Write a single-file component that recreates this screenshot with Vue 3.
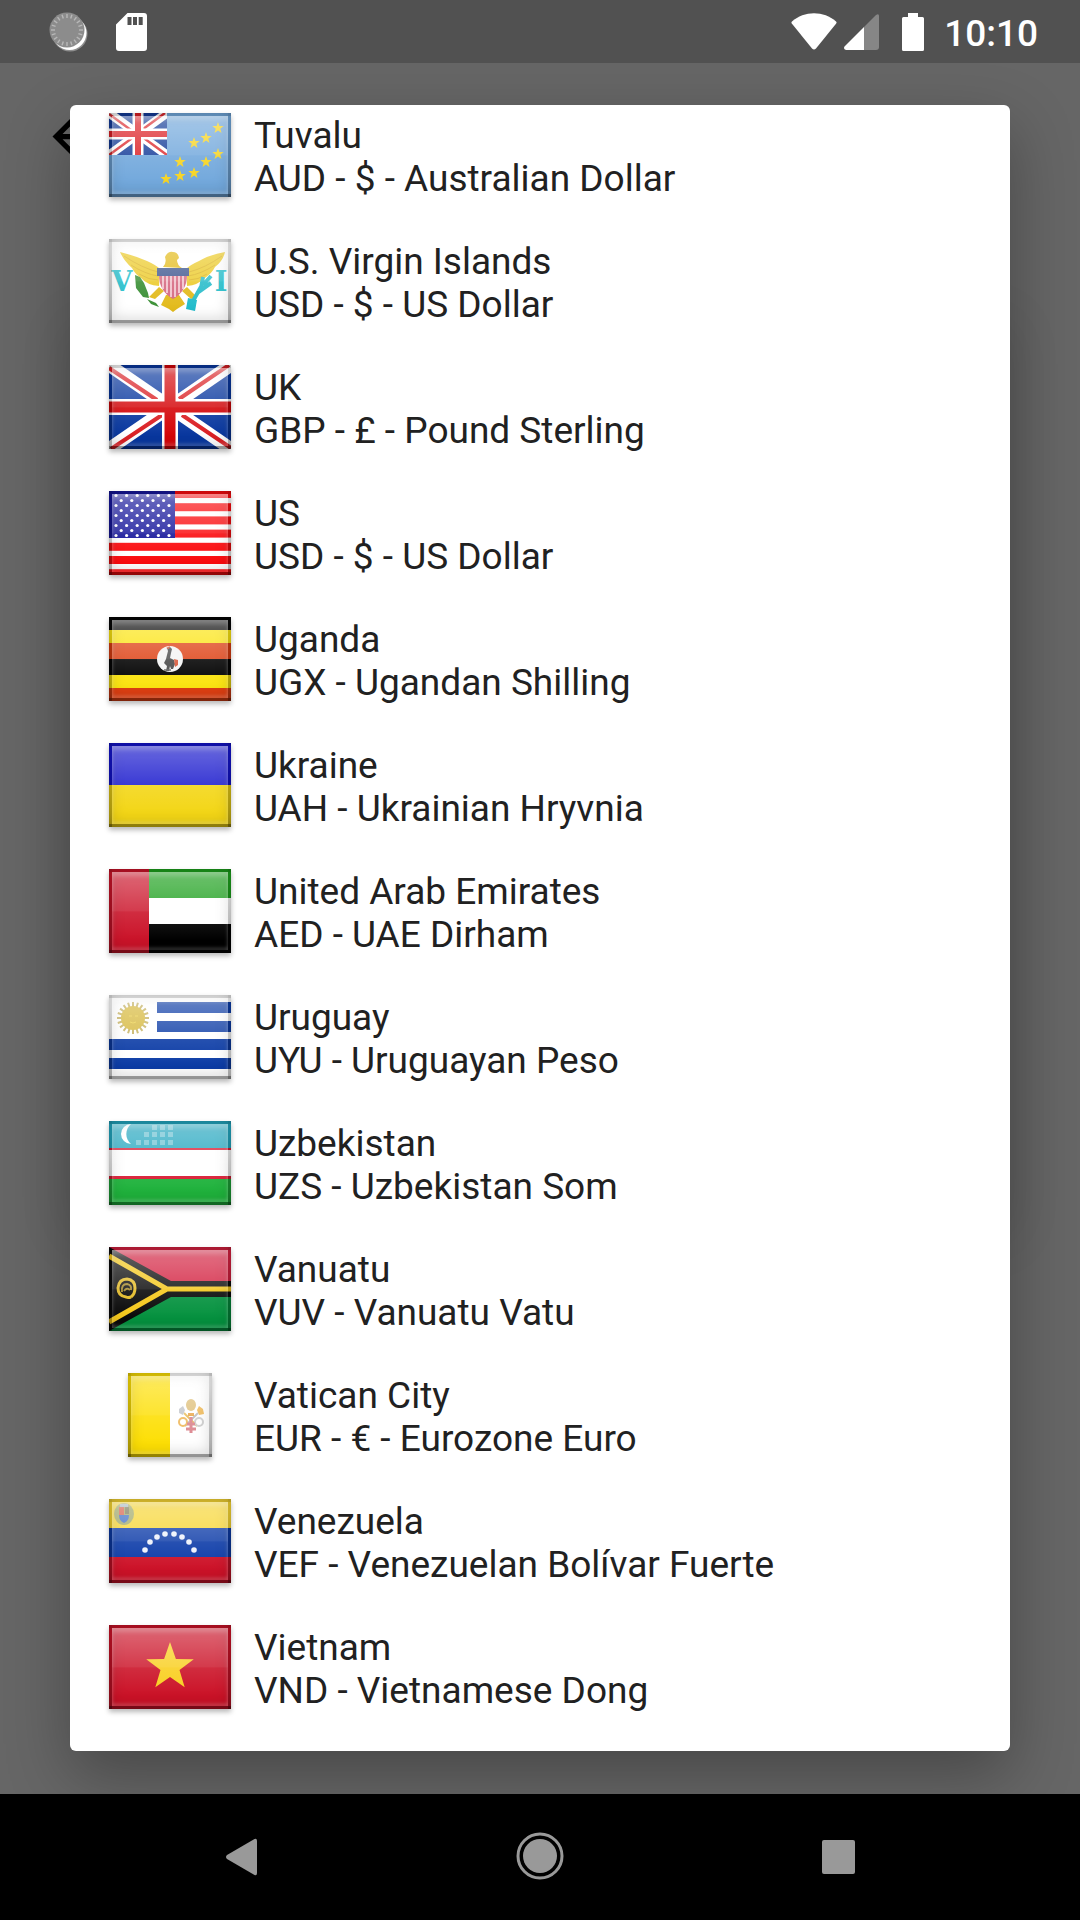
<script setup>
const countries = [
  { id: 'tv', name: 'Tuvalu', currency: 'AUD - $ - Australian Dollar' },
  { id: 'vi', name: 'U.S. Virgin Islands', currency: 'USD - $ - US Dollar' },
  { id: 'gb', name: 'UK', currency: 'GBP - £ - Pound Sterling' },
  { id: 'us', name: 'US', currency: 'USD - $ - US Dollar' },
  { id: 'ug', name: 'Uganda', currency: 'UGX - Ugandan Shilling' },
  { id: 'ua', name: 'Ukraine', currency: 'UAH - Ukrainian Hryvnia' },
  { id: 'ae', name: 'United Arab Emirates', currency: 'AED - UAE Dirham' },
  { id: 'uy', name: 'Uruguay', currency: 'UYU - Uruguayan Peso' },
  { id: 'uz', name: 'Uzbekistan', currency: 'UZS - Uzbekistan Som' },
  { id: 'vu', name: 'Vanuatu', currency: 'VUV - Vanuatu Vatu' },
  { id: 'va', name: 'Vatican City', currency: 'EUR - € - Eurozone Euro' },
  { id: 've', name: 'Venezuela', currency: 'VEF - Venezuelan Bolívar Fuerte' },
  { id: 'vn', name: 'Vietnam', currency: 'VND - Vietnamese Dong' }
]

// Corner points of a five-pointed star
function star(cx, cy, r) {
  return Array.from({ length: 10 }, (_, i) => {
    const a = (i * Math.PI) / 5 - Math.PI / 2
    const d = i % 2 ? r * 0.4 : r
    return `${(cx + d * Math.cos(a)).toFixed(1)},${(cy + d * Math.sin(a)).toFixed(1)}`
  }).join(' ')
}

// Line ends for evenly spaced rays around a centre
function rays(cx, cy, r1, r2, n) {
  return Array.from({ length: n }, (_, i) => {
    const a = (i * 2 * Math.PI) / n
    return {
      x1: cx + r1 * Math.cos(a),
      y1: cy + r1 * Math.sin(a),
      x2: cx + r2 * Math.cos(a),
      y2: cy + r2 * Math.sin(a)
    }
  })
}

const tuvaluStars = [[109, 15], [97, 25], [85, 30], [109, 41], [97, 49], [85, 60], [71, 49], [71, 63], [57, 66]]
const venezuelaStars = [[36, 51], [41, 43], [48, 38], [56, 35], [65, 35], [73, 38], [80, 43], [85, 51]]
const uzbekStars = [
  [45, 6], [53, 6], [61, 6],
  [37, 13], [45, 13], [53, 13], [61, 13],
  [29, 21], [37, 21], [45, 21], [53, 21], [61, 21]
]
const usStars = []
for (let row = 0; row < 9; row++) {
  const odd = row % 2
  for (let col = 0; col < (odd ? 5 : 6); col++) {
    usStars.push([(odd ? 12.2 : 7) + col * 10.6, 4.5 + row * 5])
  }
}
const sunRays = rays(24, 23, 9, 16, 20)
const syncTicks = rays(67, 29, 12, 16, 20)
</script>

<template>
  <div class="screen">
    <header class="status">
      <div class="status-group left">
        <svg class="sync" viewBox="48 11 40 40" aria-hidden="true">
          <circle cx="70" cy="33" r="17.5" fill="#8f8f8f" />
          <circle cx="69.5" cy="32" r="17" fill="#fff" />
          <circle cx="67" cy="29" r="17.5" fill="#8c8c8c" />
          <line v-for="(t, i) in syncTicks" :key="i" v-bind="t" stroke="#b8b8b8" stroke-width="1.4" />
        </svg>
        <svg class="sd" viewBox="0 0 31 38" aria-hidden="true">
          <path fill="#fff" fill-rule="evenodd" d="M11.5 0H28a3 3 0 0 1 3 3v32a3 3 0 0 1-3 3H3a3 3 0 0 1-3-3V11.5zM11.5 4v8h4V4zm5.500 0v8h4V4zm5.700 0v8h4V4z" />
        </svg>
      </div>
      <div class="status-group right">
        <svg class="wifi" viewBox="0 0 46 37" aria-hidden="true">
          <path fill="#fff" d="M1 8.500C13-2.500 33-2.500 45 8.500q1 1 .2 2L25 35.500q-2 2-4 0L.8 10.500q-.8-1 .2-2z" />
        </svg>
        <svg class="signal" viewBox="0 0 35 36" aria-hidden="true">
          <path fill="#868686" d="M20 13 32 1q3-2 3 1v31q0 3-3 3H20z" />
          <path fill="#fff" d="M20 13v23H2q-3-1-1.500-3.500z" />
        </svg>
        <svg class="battery" viewBox="0 0 22 38" aria-hidden="true">
          <path fill="#fff" d="M6 0h10v4h4.500q1.500 0 1.500 1.500v31q0 1.500-1.500 1.500h-19Q0 38 0 36.500v-31Q0 4 1.500 4H6z" />
        </svg>
        <time class="clock">10:10</time>
      </div>
    </header>

    <main class="stage">
      <div class="backdrop-card"></div>
      <button class="back" type="button" aria-label="Back">
        <svg viewBox="0 0 24 24"><path d="M20 11H7.830l5.590-5.590L12 4l-8 8 8 8 1.410-1.410L7.830 13H20v-2z" /></svg>
      </button>

      <section class="dialog" role="dialog" aria-label="Currency">
        <ul class="list">
          <li v-for="c in countries" :key="c.id">
            <button class="row" type="button">
              <span class="flag-cell">
                <span class="flag" :class="{ square: c.id === 'va' }">
                  <svg v-if="c.id === 'tv'" viewBox="0 0 122 84">
                    <rect width="122" height="84" fill="#72a8dc" />
                    <svg width="58" height="42" viewBox="0 0 58 42">
                      <rect width="58" height="42" fill="#133b98" />
                      <path d="M0 0 58 42M58 0 0 42" stroke="#fff" stroke-width="9" />
                      <path d="M0 1 26 20M56 0 30 19M0 42 26 23M32 23 58 42" stroke="#dd2a2e" stroke-width="2.500" />
                      <path d="M29 0V42M0 21H58" stroke="#fff" stroke-width="11" />
                      <path d="M29 0V42M0 21H58" stroke="#dc1f24" stroke-width="6" />
                    </svg>
                    <polygon v-for="(s, i) in tuvaluStars" :key="i" :points="star(s[0], s[1], 6)" fill="#f6d422" />
                  </svg>

                  <svg v-else-if="c.id === 'vi'" viewBox="0 0 122 84">
                    <rect width="122" height="84" fill="#fff" />
                    <text x="13" y="52" class="flag-letter">V</text>
                    <text x="112" y="52" class="flag-letter">I</text>
                    <path fill="#eccb2c" d="M11 13q16 4 27 9 9 4 13 8l-1 17q-12-1-18-8-6-4-9-10-8-7-12-16zM116 13q-16 3-26 9-9 4-13 8l1 17q11-1 18-8 7-5 10-11 8-6 10-15z" />
                    <path stroke="#dcb422" stroke-width="1" fill="none" d="M15 17q18 12 34 16M22 26q14 9 27 11M30 35q10 6 19 6M113 17q-17 12-33 16M106 26q-14 9-27 11M98 35q-9 6-18 6" />
                    <path fill="#e3bb1c" d="M54 28q4-4 2-10 3-6 8-5 5 0 6 6l-2 2q0 5 5 8zM50 48l-10 10 6 2 9-8zM78 48l10 10-6 2-9-8zM57 56 52 66l8 4 4 3 4-3 8-5-6-9z" />
                    <path fill="#3a8f35" d="M26 36l5 2 4 6 4 10 1 5-6-1-7-9zM38 60l9 4 3 4-8-3z" />
                    <path stroke="#2cbdcb" stroke-width="4" fill="none" d="M84 62l9-16M88 54l14-10M92 49l2-11M94 46l8-9" />
                    <path fill="#22bccb" d="M79 59l9 2-2 11-9-2z" />
                    <path fill="#d66a82" d="M50 36h28q0 16-14 24Q50 52 50 36z" />
                    <path stroke="#f8d9df" stroke-width="1.600" d="M54 36v14M58 36v18M62 36v22M66 36v22M70 36v18M74 36v14" />
                    <path fill="#3e568f" d="M48 29h32v8H48z" />
                  </svg>

                  <svg v-else-if="c.id === 'gb'" viewBox="0 0 122 84">
                    <rect width="122" height="84" fill="#08379f" />
                    <path d="M0 0 122 84M122 0 0 84" stroke="#fff" stroke-width="13" />
                    <path d="M0 3 48 35M120 0 70 34M2 84 53 50M73 50 122 83" stroke="#db2024" stroke-width="4" />
                    <path d="M61 0V84M0 42H122" stroke="#fff" stroke-width="16" />
                    <path d="M61 0V84M0 42H122" stroke="#d40508" stroke-width="11" />
                  </svg>

                  <svg v-else-if="c.id === 'us'" viewBox="0 0 122 84">
                    <rect width="122" height="84" fill="#fff" />
                    <rect v-for="n in 7" :key="n" :y="(n - 1) * 13.2 - 1" width="122" height="8" fill="#fb0b0e" />
                    <rect width="66" height="47" fill="#16169b" />
                    <circle v-for="(s, i) in usStars" :key="'s' + i" :cx="s[0]" :cy="s[1]" r="1.600" fill="#fff" />
                  </svg>

                  <svg v-else-if="c.id === 'ug'" viewBox="0 0 122 84">
                    <rect width="122" height="84" fill="#050505" />
                    <path fill="#fbe410" d="M0 13h122v13H0zM0 58h122v13H0z" />
                    <path fill="#de3f12" d="M0 26h122v16H0zM0 71h122v13H0z" />
                    <circle cx="61" cy="42" r="13" fill="#f4f4f4" />
                    <path d="M58 31l3-1 2 2-1 4-1 5 4 2 1 4-2 5h-2l-1-3-1 5h-3l1-5-3-3 2-4 1-4 1-4z" fill="#4c4c4c" />
                    <path d="M57 31l4-2-1 3zM65 42l4 1v5l-3 2z" fill="#d95a3c" />
                    <path d="M55 53h7" stroke="#666" stroke-width="1.500" />
                  </svg>

                  <svg v-else-if="c.id === 'ua'" viewBox="0 0 122 84">
                    <rect width="122" height="42" fill="#1313cc" />
                    <rect y="42" width="122" height="42" fill="#f3d616" />
                  </svg>

                  <svg v-else-if="c.id === 'ae'" viewBox="0 0 122 84">
                    <rect width="122" height="84" fill="#fff" />
                    <rect width="122" height="29" fill="#1ca01c" />
                    <rect y="55" width="122" height="29" fill="#000" />
                    <rect width="40" height="84" fill="#cb1329" />
                  </svg>

                  <svg v-else-if="c.id === 'uy'" viewBox="0 0 122 84">
                    <rect width="122" height="84" fill="#fff" />
                    <path fill="#0c3ca6" d="M48 7h74v11H48zM48 26h74v11H48zM0 44h122v11H0zM0 63h122v11H0z" />
                    <line v-for="(t, i) in sunRays" :key="i" v-bind="t" stroke="#c4b05c" stroke-width="2" />
                    <circle cx="24" cy="23" r="12" fill="#d6b83c" />
                    <path d="M20 21h3M26 21h3M21 27q3 2 6 0" stroke="#ecd04a" fill="none" />
                  </svg>

                  <svg v-else-if="c.id === 'uz'" viewBox="0 0 122 84">
                    <rect width="122" height="84" fill="#fff" />
                    <rect width="122" height="27" fill="#22a6bf" />
                    <path fill="#d81c34" d="M0 27h122v2H0zM0 55h122v3H0z" />
                    <rect y="58" width="122" height="26" fill="#1fb23c" />
                    <path d="M22 3a10 10 0 0 0 0 20 13 13 0 0 1 0-20z" fill="#fff" />
                    <rect v-for="(s, i) in uzbekStars" :key="i" :x="s[0] - 2" :y="s[1] - 2" width="5" height="5" fill="#6cc2d3" />
                  </svg>

                  <svg v-else-if="c.id === 'vu'" viewBox="0 0 122 84">
                    <rect width="122" height="42" fill="#d3203f" />
                    <rect y="42" width="122" height="42" fill="#05923f" />
                    <path fill="#0a0a0a" d="M0 0 62 34H122V50H62L0 84z" />
                    <path d="M0 9 58 42 0 75M58 42H122" fill="none" stroke="#f5c81b" stroke-width="5" />
                    <path d="M22 50q-3 1-5 0-8-1-8-9 1-9 9-9 8 1 8 9 0 6-4 9" fill="none" stroke="#e4bb25" stroke-width="3" />
                    <path d="M13 45q-1-8 5-8 5 1 4 6M15 44q3-4 6-1" fill="none" stroke="#a5892a" stroke-width="2" />
                  </svg>

                  <svg v-else-if="c.id === 'va'" viewBox="0 0 84 84">
                    <rect width="84" height="84" fill="#fff" />
                    <rect width="42" height="84" fill="#fddf05" />
                    <path d="M56 40 69 53" stroke="#e9bd5c" stroke-width="2" />
                    <path d="M70 40 57 53" stroke="#bdbdbd" stroke-width="2" />
                    <ellipse cx="63" cy="32" rx="5" ry="6" fill="#dfc07b" />
                    <path d="M60 40h6v3h-6z" fill="#e8a64a" />
                    <path d="M51 36l4-3 2 4-2 5-4-2z" fill="#c3c6cb" />
                    <path d="M75 36l-4-3-2 4 2 5 5-1z" fill="#efb64e" />
                    <circle cx="55" cy="49" r="4" fill="none" stroke="#efbb62" stroke-width="2" />
                    <circle cx="71" cy="49" r="4" fill="none" stroke="#cfcfcf" stroke-width="2" />
                    <path d="M63 44v16M59 51h8M58 56h10" stroke="#dc8890" stroke-width="3" />
                  </svg>

                  <svg v-else-if="c.id === 've'" viewBox="0 0 122 84">
                    <rect width="122" height="29" fill="#f7d633" />
                    <rect y="29" width="122" height="29" fill="#0c3ba8" />
                    <rect y="58" width="122" height="26" fill="#cd1228" />
                    <ellipse cx="15" cy="15" rx="10" ry="11" fill="#a0a865" />
                    <path d="M10 8h5v8h-5z" fill="#d9604a" />
                    <path d="M16 8h4v7h-4z" fill="#7d7a5a" />
                    <path d="M10 16h10q0 6-5 8-5-2-5-8z" fill="#3f6ec4" />
                    <path d="M11 5h8v3h-8z" fill="#a8b8c4" />
                    <circle v-for="(s, i) in venezuelaStars" :key="i" :cx="s[0]" :cy="s[1]" r="2.800" fill="#eef2fb" />
                  </svg>

                  <svg v-else viewBox="0 0 122 84">
                    <rect width="122" height="84" fill="#cb1227" />
                    <polygon :points="star(61, 42, 25)" fill="#f9cf20" />
                  </svg>
                </span>
              </span>
              <span class="text">
                <span>{{ c.name }}</span>
                <span>{{ c.currency }}</span>
              </span>
            </button>
          </li>
        </ul>
      </section>
    </main>

    <nav class="navbar" aria-label="System">
      <button type="button" aria-label="Back">
        <svg viewBox="0 0 62 62"><path d="M44.500 13Q47 12 47 15V47Q47 50 44.500 49L17 33Q15 31 17 29z" /></svg>
      </button>
      <button type="button" aria-label="Home">
        <svg viewBox="0 0 62 62">
          <circle cx="31" cy="30" r="17" />
          <circle cx="31" cy="30" r="22" class="ring" />
        </svg>
      </button>
      <button type="button" aria-label="Overview">
        <svg viewBox="0 0 62 62"><rect x="14" y="14" width="33" height="34" rx="2" /></svg>
      </button>
    </nav>
  </div>
</template>

<style>
body {
  margin: 0;
  background: #666;
}
</style>

<style scoped>
.screen {
  display: flex;
  flex-direction: column;
  min-height: 100vh;
  background: #666;
  color: #212121;
  font-family: Roboto, "Noto Sans", sans-serif;
}

button {
  margin: 0;
  padding: 0;
  border: 0;
  background: none;
  color: inherit;
  font: inherit;
  text-align: left;
  cursor: pointer;
}

svg {
  display: block;
}

.status {
  display: flex;
  justify-content: space-between;
  height: 63px;
  padding: 0 42px 0 48px;
  background: #515151;
  position: relative;
  z-index: 1;
}

.status-group {
  display: flex;
  align-items: center;
}

.left {
  gap: 28px;
}

.sync {
  width: 40px;
  height: 40px;
}

.sd {
  width: 31px;
  height: 38px;
}

.wifi {
  width: 46px;
  height: 37px;
}

.signal {
  width: 35px;
  height: 36px;
  margin-left: 7px;
}

.battery {
  width: 22px;
  height: 38px;
  margin-left: 23px;
}

.clock {
  margin-left: 20px;
  color: #fff;
  font-size: 37px;
  font-weight: 500;
  line-height: 43px;
  padding-top: 3px;
}

.stage {
  position: relative;
  flex: 1;
  padding: 42px 70px 43px;
  overflow: hidden;
}

/* Page content hidden behind the dialog; only its shadow shows at the sides */
.backdrop-card {
  position: absolute;
  inset: 250px 70px 570px;
  box-shadow: 0 12px 50px rgba(0, 0, 0, 0.12);
}

.back {
  position: absolute;
  top: 42px;
  left: 42px;
  width: 63px;
  height: 63px;
}

.dialog {
  position: relative;
  overflow: hidden;
  border-radius: 6px;
  background: #fff;
  box-shadow: 0 24px 64px rgba(0, 0, 0, 0.3);
}

/* Scrolled so that the first row is partly above the top edge */
.list {
  margin: -13px 0 0;
  padding: 0 0 21px;
  list-style: none;
}

.row {
  display: flex;
  align-items: center;
  width: 100%;
  height: 126px;
  padding: 0 39px;
  gap: 23px;
}

.flag-cell {
  display: flex;
  justify-content: center;
  flex: none;
  width: 122px;
}

.flag {
  position: relative;
  width: 122px;
  height: 84px;
  box-shadow: 0 3px 5px rgba(0, 0, 0, 0.28);
}

.flag.square {
  width: 84px;
}

.flag svg {
  width: 100%;
  height: 100%;
}

.flag svg svg {
  width: 58px;
  height: 42px;
}

.flag-letter {
  fill: #25c0cc;
  font-family: "DejaVu Serif", "Liberation Serif", serif;
  font-size: 27px;
  font-weight: 700;
  text-anchor: middle;
}

/* Bevelled rim, darker towards the bottom */
.flag::before {
  content: "";
  position: absolute;
  inset: 0;
  background:
    linear-gradient(rgba(0, 0, 0, 0.12), rgba(0, 0, 0, 0.12)) top / 100% 3px no-repeat,
    linear-gradient(rgba(0, 0, 0, 0.34), rgba(0, 0, 0, 0.34)) bottom / 100% 3px no-repeat,
    linear-gradient(rgba(0, 0, 0, 0.06), rgba(0, 0, 0, 0.28)) left / 3px 100% no-repeat,
    linear-gradient(rgba(0, 0, 0, 0.06), rgba(0, 0, 0, 0.28)) right / 3px 100% no-repeat;
  box-shadow: inset 0 -2px 16px rgba(0, 0, 0, 0.22);
}

/* Glossy sheen */
.flag::after {
  content: "";
  position: absolute;
  inset: 3px;
  background: linear-gradient(rgba(255, 255, 255, 0.36), rgba(255, 255, 255, 0.17) 50%, rgba(255, 255, 255, 0.11) 51%, rgba(255, 255, 255, 0) 88%);
  box-shadow:
    inset 0 4px 4px rgba(255, 255, 255, 0.22),
    inset 0 -3px 3px rgba(255, 255, 255, 0.14);
}

.text {
  display: flex;
  flex-direction: column;
  padding-top: 4px;
  font-size: 37px;
  line-height: 43px;
  white-space: nowrap;
}

.navbar {
  display: flex;
  justify-content: center;
  height: 126px;
  background: #000;
  position: relative;
}

.navbar button {
  display: flex;
  align-items: center;
  justify-content: center;
  width: 299px;
}

.navbar svg {
  width: 62px;
  height: 62px;
  fill: #999;
}

.navbar .ring {
  fill: none;
  stroke: #999;
  stroke-width: 3px;
}
</style>
